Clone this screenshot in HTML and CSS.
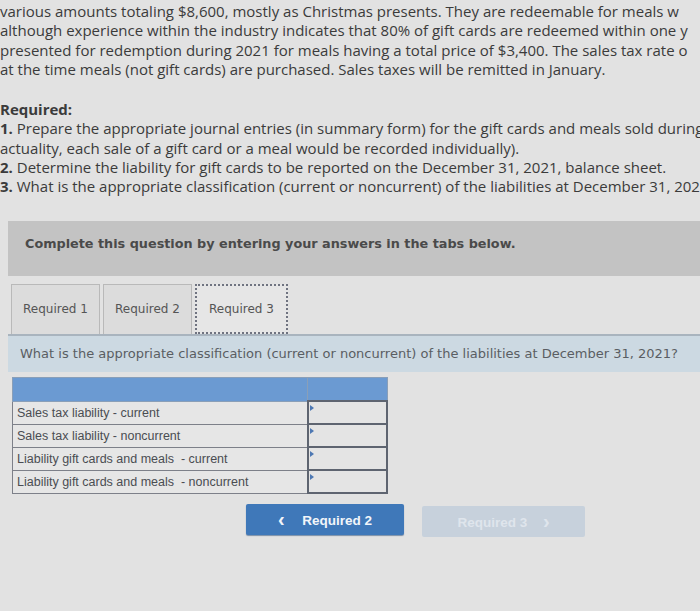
FILE: index.html
```html
<!DOCTYPE html>
<html lang="en">
<head>
  <meta charset="UTF-8" />
  <title>Required 3</title>
  <link rel="stylesheet" href="styles.css">
</head>
<body>

  <div class="problem">
    <p class="line">various amounts totaling $8,600, mostly as Christmas presents. They are redeemable for meals w</p>
    <p class="line">although experience within the industry indicates that 80% of gift cards are redeemed within one y</p>
    <p class="line">presented for redemption during 2021 for meals having a total price of $3,400. The sales tax rate o</p>
    <p class="line">at the time meals (not gift cards) are purchased. Sales taxes will be remitted in January.</p>

    <div class="required">
      <p class="line">Required:</p>
      <p class="line"><b>1.</b> Prepare the appropriate journal entries (in summary form) for the gift cards and meals sold during</p>
      <p class="line">actuality, each sale of a gift card or a meal would be recorded individually).</p>
      <p class="line"><b>2.</b> Determine the liability for gift cards to be reported on the December 31, 2021, balance sheet.</p>
      <p class="line"><b>3.</b> What is the appropriate classification (current or noncurrent) of the liabilities at December 31, 202</p>
    </div>
  </div>

  <div class="instructions">Complete this question by entering your answers in the tabs below.</div>

  <div class="tabs">
    <button class="tab">Required 1</button>
    <button class="tab">Required 2</button>
    <button class="tab active">Required 3</button>
  </div>

  <div class="tab-panel">What is the appropriate classification (current or noncurrent) of the liabilities at December 31, 2021?</div>

  <table class="answer-table">
    <tr class="head"><th></th><th></th></tr>
    <tr><td class="label">Sales tax liability - current</td><td class="pick"><div class="select"></div></td></tr>
    <tr><td class="label">Sales tax liability - noncurrent</td><td class="pick"><div class="select"></div></td></tr>
    <tr><td class="label">Liability gift cards and meals &nbsp;- current</td><td class="pick"><div class="select"></div></td></tr>
    <tr><td class="label">Liability gift cards and meals &nbsp;- noncurrent</td><td class="pick"><div class="select"></div></td></tr>
  </table>

  <div class="nav-buttons">
    <button class="nav-btn prev"><span class="chev">&lsaquo;</span> Required 2</button>
    <button class="nav-btn next" disabled>Required 3 <span class="chev">&rsaquo;</span></button>
  </div>

</body>
</html>
```

FILE: styles.css
```css
* {
  margin: 0;
  padding: 0;
  box-sizing: border-box;
}
body {
  background-color: #e2e2e2;
  font-family: "Open Sans", "Lato", sans-serif;
  width: 700px;
  height: 611px;
  overflow: hidden;
}
.problem {
  padding: 2px 0 0 0;
  color: #3b3b3b;
  font-size: 15px;
}
.line {
  white-space: nowrap;
  overflow: hidden;
  line-height: 19.3px;
  height: 19.3px;
}
.required {
  margin-top: 21px;
}
.required b {
  font-weight: 700;
}
.required .line:first-child {
  font-weight: 700;
}
.instructions {
  margin: 24px 0 0 8px;
  height: 55px;
  background-color: #c3c3c3;
  padding: 0 0 9px 17px;
  display: flex;
  align-items: center;
  font-family: "DejaVu Sans", sans-serif;
  font-weight: bold;
  font-size: 12.8px;
  color: #4a4a4a;
}
.tabs {
  display: flex;
  gap: 3px;
  margin: 8px 0 0 11px;
}
.tab {
  width: 89px;
  height: 50px;
  background-color: #dcdcdc;
  border: 1px solid #b9b9b9;
  border-bottom: none;
  font-family: "DejaVu Sans", sans-serif;
  font-size: 12px;
  color: #555;
  cursor: pointer;
}
.tab.active {
  width: 93px;
  background-color: #e6e6e6;
  border: 2px dotted #6f7380;
}
.tab-panel {
  margin-left: 8px;
  height: 38px;
  border-top: 2px solid #a9b4be;
  background-color: #ccd9e2;
  padding-left: 12px;
  display: flex;
  align-items: center;
  font-family: "DejaVu Sans", sans-serif;
  font-size: 13px;
  color: #5a5e63;
}
.answer-table {
  margin: 5px 0 0 12px;
  border-collapse: collapse;
  width: 376px;
  font-family: "Liberation Sans", sans-serif;
  font-size: 12.5px;
  color: #4a4d52;
}
.answer-table th {
  background-color: #6b9ad2;
  height: 24px;
  border: 1px solid #8a9fb8;
}
.answer-table th:first-child {
  width: 295px;
}
.answer-table td {
  height: 23px;
  border: 1px solid #7d8089;
}
.answer-table td.label {
  padding-left: 4px;
  background-color: #e6e6e6;
}
.answer-table td.pick {
  padding: 1px 0 0 1px;
  border: 2px solid #5e6470;
  background-color: #e4e4e4;
  position: relative;
}
.select {
  height: 19px;
}
.pick::before {
  content: "";
  position: absolute;
  top: 3px;
  left: 1px;
  border-top: 3px solid transparent;
  border-bottom: 3px solid transparent;
  border-left: 4px solid #4d78b3;
}
.nav-buttons {
  display: flex;
  gap: 18px;
  margin: 10px 0 0 246px;
  align-items: flex-start;
}
.nav-btn {
  width: 158px;
  height: 31px;
  border: none;
  border-radius: 2px;
  font-family: "Liberation Sans", sans-serif;
  font-weight: bold;
  font-size: 13.5px;
}
.nav-btn .chev {
  font-size: 20px;
  vertical-align: -1px;
  margin-right: 14px;
}
.prev {
  background-color: #3f78b9;
  color: #f2f5f9;
  box-shadow: 0 1px 1px #7a8fa8;
}
.next {
  width: 163px;
  margin-top: 2px;
  background-color: #c7d1dc;
  color: #dfe5ec;
}
.next .chev {
  margin: 0 0 0 12px;
}
```
